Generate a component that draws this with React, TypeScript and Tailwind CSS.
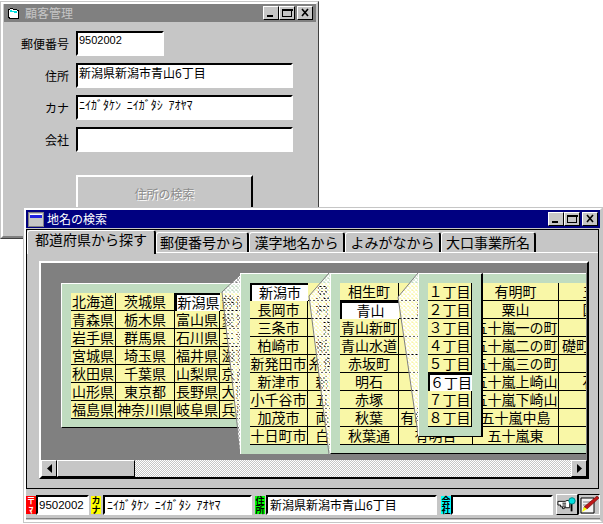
const cellBg = "bg-[#f9f7a7]"

const prefectures = [
  ["北海道", "茨城県", "新潟県", "静岡県"],
  ["青森県", "栃木県", "富山県", "愛知県"],
  ["岩手県", "群馬県", "石川県", "三重県"],
  ["宮城県", "埼玉県", "福井県", "滋賀県"],
  ["秋田県", "千葉県", "山梨県", "京都府"],
  ["山形県", "東京都", "長野県", "大阪府"],
  ["福島県", "神奈川県", "岐阜県", "兵庫県"],
]

const cities = [
  ["新潟市", "見附市"],
  ["長岡市", "村上市"],
  ["三条市", "燕市"],
  ["柏崎市", "栃尾市"],
  ["新発田市", "糸魚川市"],
  ["新津市", "新井市"],
  ["小千谷市", "五泉市"],
  ["加茂市", "両津市"],
  ["十日町市", "白根市"],
]

const towns = [
  ["相生町", "", "有明町", "五十公野"],
  ["青山", "荒川町", "粟山", "国上町通"],
  ["青山新町", "", "五十嵐一の町", ""],
  ["青山水道", "", "五十嵐二の町", "礎町"],
  ["赤坂町", "", "五十嵐三の町", ""],
  ["明石", "", "五十嵐上崎山", "石山団地"],
  ["赤塚", "綾町", "五十嵐下崎山", ""],
  ["秋葉", "有明大橋町", "五十嵐中島", "一番町"],
  ["秋葉通", "有明台", "五十嵐東", ""],
]

const chome = ["１丁目", "２丁目", "３丁目", "４丁目", "５丁目", "６丁目", "７丁目", "８丁目"].map((c) => [c])

function Table({ rows, cols, selected }: { rows: string[][]; cols: string; selected: string }) {
  return (
    <div className={`grid auto-rows-[18px] ${cols}`}>
      {rows.flat().map((text, i) => {
        const isSelected = text === selected
        return (
          <div
            key={i}
            className={
              isSelected
                ? "flex items-center justify-center overflow-hidden whitespace-nowrap border-t-2 border-l-2 border-black bg-white pb-[3px] text-[14px] leading-[14px] text-black"
                : `flex items-center justify-center overflow-hidden whitespace-nowrap border-r border-b border-black pb-[1px] text-[14px] leading-[14px] text-black ${cellBg} ${text === "礎町" ? "!justify-start pl-[3px]" : ""}`
            }
          >
            {text}
          </div>
        )
      })}
    </div>
  )
}

function Fan({ id, points, line }: { id: string; points: string; line: string }) {
  return (
    <svg className="absolute left-0 top-0 h-[197px] w-[546px]" viewBox="41 263 546 197">
      <defs>
        <pattern id={id} width="4" height="4" patternUnits="userSpaceOnUse">
          <path d="M0 0L4 4M4 0L0 4" stroke="#fff" strokeWidth="1.3" />
        </pattern>
      </defs>
      <polygon points={points} fill={`url(#${id})`} />
      <polyline points={line} fill="none" stroke="#808080" strokeWidth="1" />
    </svg>
  )
}

function CaptionButton({ kind }: { kind: "min" | "max" | "close" }) {
  return (
    <div className="flex h-[14px] w-[16px] items-center justify-center border border-t-white border-l-white border-r-black border-b-black bg-[#c6c6c6]">
      <svg width="12" height="10" viewBox="0 0 12 10" shapeRendering="crispEdges">
        {kind === "min" && <rect x="2" y="7" width="6" height="2" fill="#000" />}
        {kind === "max" && <path d="M1.5 1.5H10.5V8.5H1.5ZM1 1H11V2H1Z" fill="none" stroke="#000" />}
        {kind === "close" && <path d="M3 1L9 8M9 1L3 8" stroke="#000" strokeWidth="1.6" shapeRendering="auto" />}
      </svg>
    </div>
  )
}

function Sunken({ className, text, textClass }: { className: string; text?: string; textClass: string }) {
  return (
    <div className={`overflow-hidden whitespace-nowrap border-2 border-t-black border-l-black border-r-white border-b-white bg-white text-black ${className} ${textClass}`}>
      {text}
    </div>
  )
}

function FormRow({ label, width, text, textClass }: { label: string; width: string; text?: string; textClass: string }) {
  return (
    <div className="flex items-center">
      <span className="w-[65px] text-right text-[12px] leading-none text-black">{label}</span>
      <div className="w-[7px]" />
      <Sunken className={`${width} h-[25px] pl-[1px]`} text={text} textClass={textClass} />
    </div>
  )
}

function Tag({ top, bottom, className }: { top: string; bottom: string; className: string }) {
  return (
    <div className={`flex h-[18px] w-[10px] flex-col items-center justify-center text-[9px] font-bold leading-[9px] ${className}`}>
      <span>{top}</span>
      <span>{bottom}</span>
    </div>
  )
}

function HandIcon() {
  return (
    <svg width="22" height="18" viewBox="0 0 22 18">
      <path d="M1 5H9L11 4H14V12H8V13H6V11H4V9H1Z" fill="#fff" stroke="#000" strokeWidth="1" />
      <path d="M6 7H10M6 9H10M6 11H10" stroke="#000" strokeWidth="1" />
      <rect x="15" y="7" width="2" height="9" fill="#000" />
      <circle cx="16.5" cy="4.5" r="3.5" fill="#00e0e0" stroke="#008080" strokeWidth="1" />
    </svg>
  )
}

function PencilIcon() {
  return (
    <svg width="20" height="19" viewBox="0 0 20 19">
      <path d="M2 3H15V18H2Z" fill="#f4f4f4" stroke="#000" strokeWidth="1" />
      <path d="M4 7H12M4 10H10M4 13H8" stroke="#808080" strokeWidth="1" />
      <path d="M18 1L20 3L8 14L5 12Z" fill="#c01818" stroke="#600" strokeWidth="0.6" />
      <path d="M5 12L8 14L3 17Z" fill="#ffff00" />
    </svg>
  )
}

export default function App() {
  return (
    <div lang="ja" className="relative h-[524px] w-[603px] overflow-hidden bg-white font-['Noto_Sans_CJK_JP','Liberation_Sans',sans-serif]">
      {/* back window, inactive */}
      <div className="absolute left-0 top-[1px] h-[238px] w-[319px] border border-t-[#c6c6c6] border-l-[#c6c6c6] border-r-[#404040] border-b-[#404040] bg-[#c6c6c6]">
        <div className="h-full border-2 border-t-white border-l-white border-r-[#c6c6c6] border-b-[#808080] pl-[1px]">
          <div className="flex h-[18px] w-[312px] items-center bg-[#808080] px-[3px]">
            <svg width="13" height="13" viewBox="0 0 13 13" shapeRendering="crispEdges">
              <path d="M1.5 2.5L4 1.5L11.5 3.5V11.5H3L1.5 10Z" fill="#fff" stroke="#000" />
              <path d="M3 3L10 4.5V6L3 5Z" fill="#00e0e0" />
            </svg>
            <span className="ml-[5px] text-[12px] leading-none text-[#c6c6c6]">顧客管理</span>
            <div className="ml-auto flex">
              <CaptionButton kind="min" />
              <CaptionButton kind="max" />
              <div className="w-[2px]" />
              <CaptionButton kind="close" />
            </div>
          </div>
          <div className="flex flex-col gap-[7px] pt-[9px]">
            <FormRow label="郵便番号" width="w-[88px]" text="9502002" textClass="font-['Liberation_Sans'] text-[11px] leading-[14px]" />
            <FormRow label="住所" width="w-[217px]" text="新潟県新潟市青山6丁目" textClass="text-[12px] leading-[16px]" />
            <FormRow label="カナ" width="w-[217px]" text="ﾆｲｶﾞﾀｹﾝ ﾆｲｶﾞﾀｼ ｱｵﾔﾏ" textClass="text-[12px] leading-[16px] [word-spacing:3px]" />
            <FormRow label="会社" width="w-[217px]" textClass="text-[12px]" />
          </div>
          <div className="ml-[72px] mt-[23px] flex h-[41px] w-[177px] items-center justify-center border-2 border-t-white border-l-white border-r-black border-b-black pb-[3px] text-[12px] leading-[16px] text-[#8c8c8c] [text-shadow:1px_1px_0_#fff]">
            住所の検索
          </div>
        </div>
      </div>

      {/* front window */}
      <div className="absolute left-[23px] top-[207px] h-[316px] w-[580px] border border-[#c6c6c6] bg-[#c6c6c6]">
        <div className="h-full border-2 border-t-white border-l-white border-r-[#c6c6c6] border-b-white">
          <div className="flex h-[18px] items-center bg-[#000080] pl-[2px] pr-[2px]">
            <svg width="16" height="15" viewBox="0 0 16 15" shapeRendering="crispEdges">
              <rect x="0.5" y="0.5" width="15" height="14" fill="#c6c6c6" stroke="#808080" />
              <rect x="2" y="3" width="12" height="3" fill="#2020e0" />
              <rect x="2" y="2" width="12" height="1" fill="#fff" />
            </svg>
            <span className="ml-[3px] text-[12px] leading-none text-white">地名の検索</span>
            <div className="ml-auto flex">
              <CaptionButton kind="min" />
              <CaptionButton kind="max" />
              <div className="w-[2px]" />
              <CaptionButton kind="close" />
            </div>
          </div>

          <div className="mt-[1px] h-[260px] w-[573px] border border-black">
            {/* tabs */}
            <div className="flex h-[23px] items-end border-b border-white">
              <div className="relative z-10 -mb-[2px] flex h-[24px] w-[129px] items-start justify-center rounded-t-[3px] border-t border-l border-r-2 border-t-white border-l-white border-r-black bg-[#c6c6c6] text-[14px] leading-[17px] text-black">
                都道府県から探す
              </div>
              <div className="flex h-[20px] w-[93px] items-center justify-center rounded-t-[3px] border-t border-l border-r-2 border-t-white border-l-white border-r-black pb-[1px] text-[14px] leading-[16px] text-black">郵便番号から</div>
              <div className="flex h-[20px] w-[96px] items-center justify-center rounded-t-[3px] border-t border-l border-r-2 border-t-white border-l-white border-r-black pb-[1px] text-[14px] leading-[16px] text-black">漢字地名から</div>
              <div className="flex h-[20px] w-[96px] items-center justify-center rounded-t-[3px] border-t border-l border-r-2 border-t-white border-l-white border-r-black pb-[1px] text-[14px] leading-[16px] text-black">よみがなから</div>
              <div className="flex h-[20px] w-[95px] items-center justify-center rounded-t-[3px] border-t border-l border-r-2 border-t-white border-l-white border-r-black pb-[1px] text-[14px] leading-[16px] text-black">大口事業所名</div>
            </div>

            {/* map pane */}
            <div className="ml-[12px] mt-[8px] h-[218px] w-[550px] border-2 border-t-white border-l-white border-r-black border-b-black">
              <div className="relative h-[197px] w-[546px] overflow-hidden bg-[#808080]">
                <div className="absolute left-[20px] top-[20px] h-[145px] w-[190px] overflow-hidden border-t border-l border-b border-t-white border-l-white border-b-black bg-[#c0dcc0] pl-[9px] pt-[9px]">
                  <Table rows={prefectures} cols="grid-cols-[45px_59px_45px_46px]" selected="新潟県" />
                </div>
                <Fan id="fan1" points="222,292 240,275 240,450" line="240,275 222,292 238,432" />

                <div className="absolute left-[199px] top-[10px] h-[181px] w-[95px] overflow-hidden border-t border-l border-t-white border-l-white bg-[#c0dcc0] pl-[9px] pt-[9px]">
                  <Table rows={cities} cols="grid-cols-[58px_58px]" selected="新潟市" />
                </div>
                <Fan id="fan2" points="330,273 309,296 329,454 330,454" line="329,273 309,296 329,454" />

                <div className="absolute left-[289px] top-[10px] h-[181px] w-[256px] overflow-hidden border-t border-l border-b border-t-white border-l-white border-b-black bg-[#c0dcc0] pl-[9px] pt-[9px]">
                  <Table rows={towns} cols="grid-cols-[59px_74px_86px_104px]" selected="青山" />
                </div>
                <Fan id="fan3" points="418,273 398,297 418,434" line="418,273 398,297 418,434" />

                <div className="absolute left-[377px] top-[10px] h-[164px] w-[65px] overflow-hidden border-t border-l border-r-2 border-b border-t-white border-l-white border-r-black border-b-black bg-[#c0dcc0] pl-[9px] pt-[9px]">
                  <Table rows={chome} cols="grid-cols-[44px]" selected="６丁目" />
                </div>
              </div>

              {/* scroll bar */}
              <div className="flex h-[17px] w-[546px]">
                <div className="flex w-[16px] items-center justify-center border border-t-white border-l-white border-r-black border-b-black bg-[#c6c6c6]">
                  <svg width="5" height="9" viewBox="0 0 5 9"><path d="M5 0V9L0 4.5Z" fill="#000" /></svg>
                </div>
                <div className="w-[78px] border border-t-white border-l-white border-r-black border-b-black bg-[#c6c6c6]" />
                <div className="flex-1 bg-[repeating-conic-gradient(#fff_0_25%,#c6c6c6_0_50%)] bg-[length:2px_2px]" />
                <div className="flex w-[16px] items-center justify-center border border-t-white border-l-white border-r-black border-b-black bg-[#c6c6c6]">
                  <svg width="5" height="9" viewBox="0 0 5 9"><path d="M0 0V9L5 4.5Z" fill="#000" /></svg>
                </div>
              </div>
            </div>
          </div>

          {/* status fields */}
          <div className="mt-[5px] flex h-[21px] items-center">
            <Tag top="〒" bottom="ﾏ" className="bg-[#ff0000] text-white" />
            <Sunken className="h-[20px] w-[53px] pl-[1px]" text="9502002" textClass="font-['Liberation_Sans'] text-[11.5px] leading-[16px]" />
            <div className="w-[2px]" />
            <Tag top="カ" bottom="ナ" className="bg-[#ffff00] text-black" />
            <div className="w-[2px]" />
            <Sunken className="h-[20px] w-[149px] pl-[2px]" text="ﾆｲｶﾞﾀｹﾝ ﾆｲｶﾞﾀｼ ｱｵﾔﾏ" textClass="text-[12px] leading-[16px] [word-spacing:3px]" />
            <div className="w-[3px]" />
            <Tag top="住" bottom="所" className="bg-[#00ff00] text-black" />
            <div className="w-[1px]" />
            <Sunken className="h-[20px] w-[171px] pl-[2px]" text="新潟県新潟市青山6丁目" textClass="text-[12px] leading-[16px]" />
            <div className="w-[4px]" />
            <Tag top="会" bottom="社" className="bg-[#00ffff] text-black" />
            <Sunken className="h-[20px] w-[102px]" textClass="text-[12px]" />
            <div className="w-[3px]" />
            <div className="flex h-[21px] w-[22px] items-center justify-center border border-t-white border-l-white border-r-black border-b-black">
              <HandIcon />
            </div>
            <div className="flex h-[21px] w-[22px] items-center justify-center border border-t-black border-l-black border-r-white border-b-white">
              <PencilIcon />
            </div>
          </div>
          <div className="mt-[3px] border-t border-[#808080]" />
        </div>
      </div>
    </div>
  )
}
